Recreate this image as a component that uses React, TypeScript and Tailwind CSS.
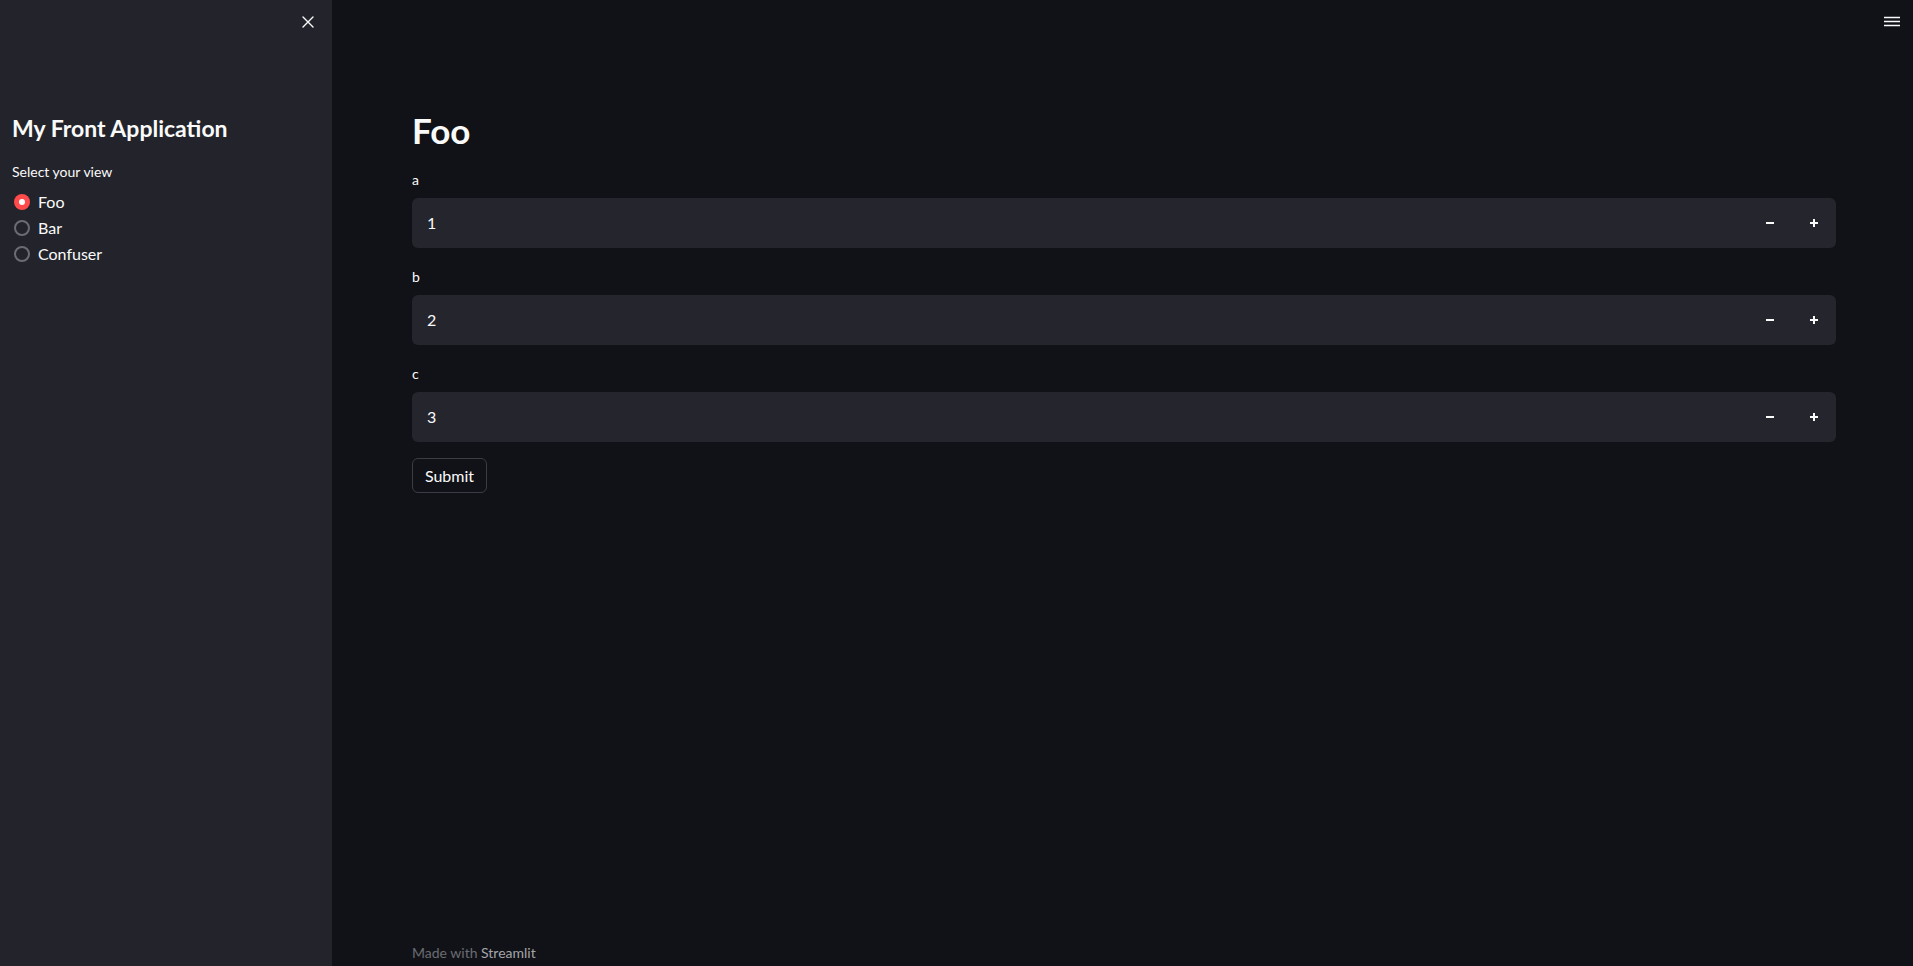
import React from "react";

const font = { fontFamily: "Lato, 'Noto Sans', sans-serif" };

function Radio({ label, checked }: { label: string; checked?: boolean }) {
  return (
    <div className="flex h-[26px] items-center gap-2">
      {checked ? (
        <span className="flex h-4 w-4 items-center justify-center rounded-full bg-[#ff4b4b]">
          <span className="h-[6px] w-[6px] rounded-full bg-white" />
        </span>
      ) : (
        <span className="h-4 w-4 rounded-full border-2 border-[#6b6c73]" />
      )}
      <span className="text-[16px] text-[#fafafa]">{label}</span>
    </div>
  );
}

function NumberInput({ label, value }: { label: string; value: string }) {
  return (
    <div className="mb-[18px]">
      <div className="mb-[8px] h-[21px] text-[14px] leading-[21px] text-[#fafafa]">{label}</div>
      <div className="flex h-[50px] overflow-hidden rounded-[6px] bg-[#24252d]">
        <div className="flex flex-1 items-center pl-[15px] text-[16px] text-[#fafafa]">{value}</div>
        <button className="flex w-[44px] items-center justify-center">
          <svg width="10" height="10" viewBox="0 0 10 10">
            <rect x="1" y="4" width="8" height="2" fill="#fafafa" />
          </svg>
        </button>
        <button className="flex w-[44px] items-center justify-center">
          <svg width="10" height="10" viewBox="0 0 10 10">
            <rect x="1" y="4" width="8" height="2" fill="#fafafa" />
            <rect x="4" y="1" width="2" height="8" fill="#fafafa" />
          </svg>
        </button>
      </div>
    </div>
  );
}

export default function App() {
  return (
    <div className="flex h-[966px] w-full overflow-hidden bg-[#111217]" style={font}>
      <aside className="flex h-full w-[332px] shrink-0 flex-col bg-[#23242b] pl-3">
        <div className="flex justify-end pr-[18px] pt-[16px]">
          <svg width="12" height="12" viewBox="0 0 12 12" stroke="#fafafa" strokeWidth="1.4" strokeLinecap="round">
            <path d="M1 1L11 11M11 1L1 11" />
          </svg>
        </div>
        <h1 className="mt-[85px] text-[23px] font-bold leading-[30px] text-[#fafafa]">My Front Application</h1>
        <div className="mt-[18px] h-[21px] text-[14px] leading-[21px] text-[#fafafa]">Select your view</div>
        <div className="mt-[7px] flex flex-col pl-[2px]">
          <Radio label="Foo" checked />
          <Radio label="Bar" />
          <Radio label="Confuser" />
        </div>
      </aside>
      <main className="relative flex h-full flex-1 flex-col pl-[80px] pr-[77px]">
        <div className="absolute right-[13px] top-[16px]">
          <svg width="16" height="12" viewBox="0 0 16 12" stroke="#fafafa" strokeWidth="1.6">
            <path d="M0 1.5H16M0 5.5H16M0 9.5H16" />
          </svg>
        </div>
        <div className="pt-[108px]">
          <h1 className="mb-[17px] h-[44px] text-[35px] font-bold leading-[44px] text-[#fafafa]">Foo</h1>
          <NumberInput label="a" value="1" />
          <NumberInput label="b" value="2" />
          <NumberInput label="c" value="3" />
          <button className="-mt-[2px] h-[35px] w-[75px] rounded-[6px] border border-[#3b3c45] text-[16px] text-[#fafafa]">
            Submit
          </button>
        </div>
        <div className="mt-auto pb-[3px] text-[14px] leading-[21px]">
          <span className="text-[#6b6c73]">Made with </span>
          <span className="text-[#a4a5aa]">Streamlit</span>
        </div>
      </main>
    </div>
  );
}
